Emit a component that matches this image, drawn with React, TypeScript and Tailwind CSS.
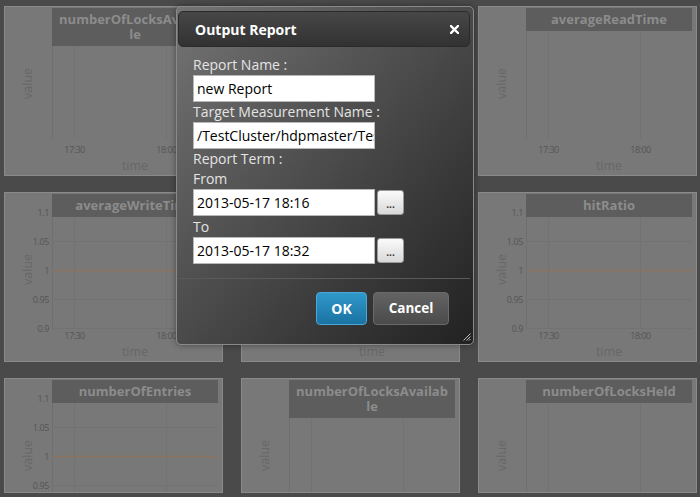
import React from 'react';

type PanelProps = {
  title: React.ReactNode;
  lines?: 1 | 2;
  ticks?: boolean;
  short?: boolean;
};

const tickValues = ['1.1', '1.05', '1', '0.95', '0.9'];

function ChartPanel({ title, lines = 1, ticks = false, short = false }: PanelProps) {
  // header bottom, measured from the panel's top edge
  const hb = lines === 2 ? 40 : 25;
  const svgH = 151 - hb;
  const top = ticks ? 20 - hb : 0;
  const bottom = (ticks ? 136 : 133) - hb;

  return (
    <div
      className={`${short ? 'h-[115px]' : 'h-[170px]'} flex overflow-hidden border border-[#8a8a8a] bg-[#787878]`}
    >
      <div className="w-[47px] h-[168px] shrink-0 flex items-center justify-center pb-[16px]">
        <span className="-rotate-90 text-[12.5px] text-[#676767]">value</span>
      </div>
      <div className="w-[166px] h-[168px] shrink-0 flex flex-col">
        <div className="relative z-10 mt-[1px] bg-[#5d5d5d] px-[2px] py-[4px] text-center text-[13px] leading-[15px] font-bold text-[#8c8c8c]">
          {title}
        </div>
        <svg width="166" height={svgH} className="block overflow-visible shrink-0">
          <line x1="0.5" y1={top} x2="0.5" y2={bottom} stroke="#6f6f6f" />
          <line x1="22.5" y1={top} x2="22.5" y2={bottom} stroke="#727272" />
          <line x1="114.5" y1={top} x2="114.5" y2={bottom} stroke="#727272" />
          {ticks &&
            tickValues.map((v, i) => {
              const y = 20 + i * 29 - hb;
              return (
                <g key={v}>
                  <line
                    x1="0"
                    x2="166"
                    y1={y + 0.5}
                    y2={y + 0.5}
                    stroke={v === '1' ? '#8b735f' : '#727272'}
                    strokeWidth={v === '1' ? 1.5 : 1}
                  />
                  <text x="-3" y={y + 2} textAnchor="end" dominantBaseline="middle" fontSize="9" letterSpacing="-0.4" fill="#555">
                    {v}
                  </text>
                </g>
              );
            })}
          <text x="22.5" y={145 - hb} textAnchor="middle" dominantBaseline="middle" fontSize="9" letterSpacing="-0.5" fill="#555">
            17:30
          </text>
          <text x="114.5" y={145 - hb} textAnchor="middle" dominantBaseline="middle" fontSize="9" letterSpacing="-0.5" fill="#555">
            18:00
          </text>
        </svg>
        <div className="h-[18px] leading-[18px] text-center text-[12.5px] text-[#676767]">time</div>
      </div>
    </div>
  );
}

function Field({ value }: { value: string }) {
  return (
    <input
      readOnly
      value={value}
      className="h-[27px] w-[182px] border border-[#b8b8b8] bg-white pl-[3px] text-[14px] text-black outline-none"
    />
  );
}

function DateRow({ value }: { value: string }) {
  return (
    <div className="flex items-center gap-[2px]">
      <Field value={value} />
      <button className="h-[25px] w-[27px] rounded-[3px] border border-[#9a9a9a] bg-linear-to-b from-[#fbfbfb] to-[#d8d8d8] flex items-end justify-center pb-[5px] text-[10px] leading-[10px] font-bold text-[#333]">
        ...
      </button>
    </div>
  );
}

export default function App() {
  return (
    <div className="relative w-[700px] h-[497px] overflow-hidden bg-[#4a4a4a] font-['Open_Sans',sans-serif]">
      {/* charts under the modal */}
      <div className="grid grid-cols-3 gap-x-[18px] gap-y-[16px] pt-[6px] pl-[4px] pr-[3px]">
        <ChartPanel title={<>numberOfLocksAvailab<br />le</>} lines={2} />
        <ChartPanel title="numberOfLocksCreated" />
        <ChartPanel title="averageReadTime" />

        <ChartPanel title="averageWriteTime" ticks />
        <ChartPanel title="totalLockTime" ticks />
        <ChartPanel title="hitRatio" ticks />

        <ChartPanel title="numberOfEntries" ticks short />
        <ChartPanel title={<>numberOfLocksAvailab<br />le</>} lines={2} short />
        <ChartPanel title="numberOfLocksHeld" short />
      </div>

      {/* modal dialog */}
      <div className="absolute z-50 left-[176px] top-[6px] w-[298px] h-[339px] flex flex-col rounded-[5px] border border-[#8a8a8a] bg-linear-to-br from-[#747474] via-[#4a4a4a] to-[#222222] shadow-[0_0_6px_rgba(0,0,0,0.4)]">
        <div className="ml-[1px] mr-[3px] mt-[4px] h-[36px] flex items-center justify-between rounded-[5px] border border-[#2a2a2a] bg-linear-to-b from-[#474747] to-[#323232] pl-[16px] pr-[10px]">
          <span className="text-[14px] font-bold text-white">Output Report</span>
          <svg width="9" height="9" viewBox="0 0 9 9">
            <path d="M1 1 L8 8 M8 1 L1 8" stroke="#fff" strokeWidth="2.4" strokeLinecap="square" />
          </svg>
        </div>

        <div className="flex flex-col pl-[16px] pt-[8px] text-[14px] text-[#e4e4e4]">
          <div className="h-[20px] leading-[20px]">Report Name :</div>
          <Field value="new Report" />
          <div className="h-[20px] leading-[20px]">Target Measurement Name :</div>
          <Field value="/TestCluster/hdpmaster/TestMeasurement" />
          <div className="h-[20px] leading-[20px]">Report Term :</div>
          <div className="h-[20px] leading-[20px]">From</div>
          <DateRow value="2013-05-17 18:16" />
          <div className="mt-[1px] h-[20px] leading-[20px]">To</div>
          <DateRow value="2013-05-17 18:32" />
        </div>

        <div className="ml-[1px] mr-[3px] mt-[14px] border-t border-[#5a5a5a]" />

        <div className="mt-[13px] flex justify-end gap-[6px] pr-[24px]">
          <button className="h-[33px] w-[51px] rounded-[4px] border border-[#4aa8d6] bg-linear-to-b from-[#2f98ca] to-[#1a73a2] text-[14px] font-bold text-white">
            OK
          </button>
          <button className="h-[33px] w-[76px] rounded-[4px] border border-[#6a6a6a] bg-linear-to-b from-[#636363] to-[#4b4b4b] text-[13.5px] font-bold text-white">
            Cancel
          </button>
        </div>

        <div className="mt-[7px] flex justify-end pr-[2px]">
          <svg width="9" height="9" viewBox="0 0 9 9">
            <path d="M8.5 1.5 L1.5 8.5 M8.5 4.5 L4.5 8.5 M8.5 7 L7 8.5" stroke="#bdbdbd" strokeWidth="1" />
          </svg>
        </div>
      </div>
    </div>
  );
}
